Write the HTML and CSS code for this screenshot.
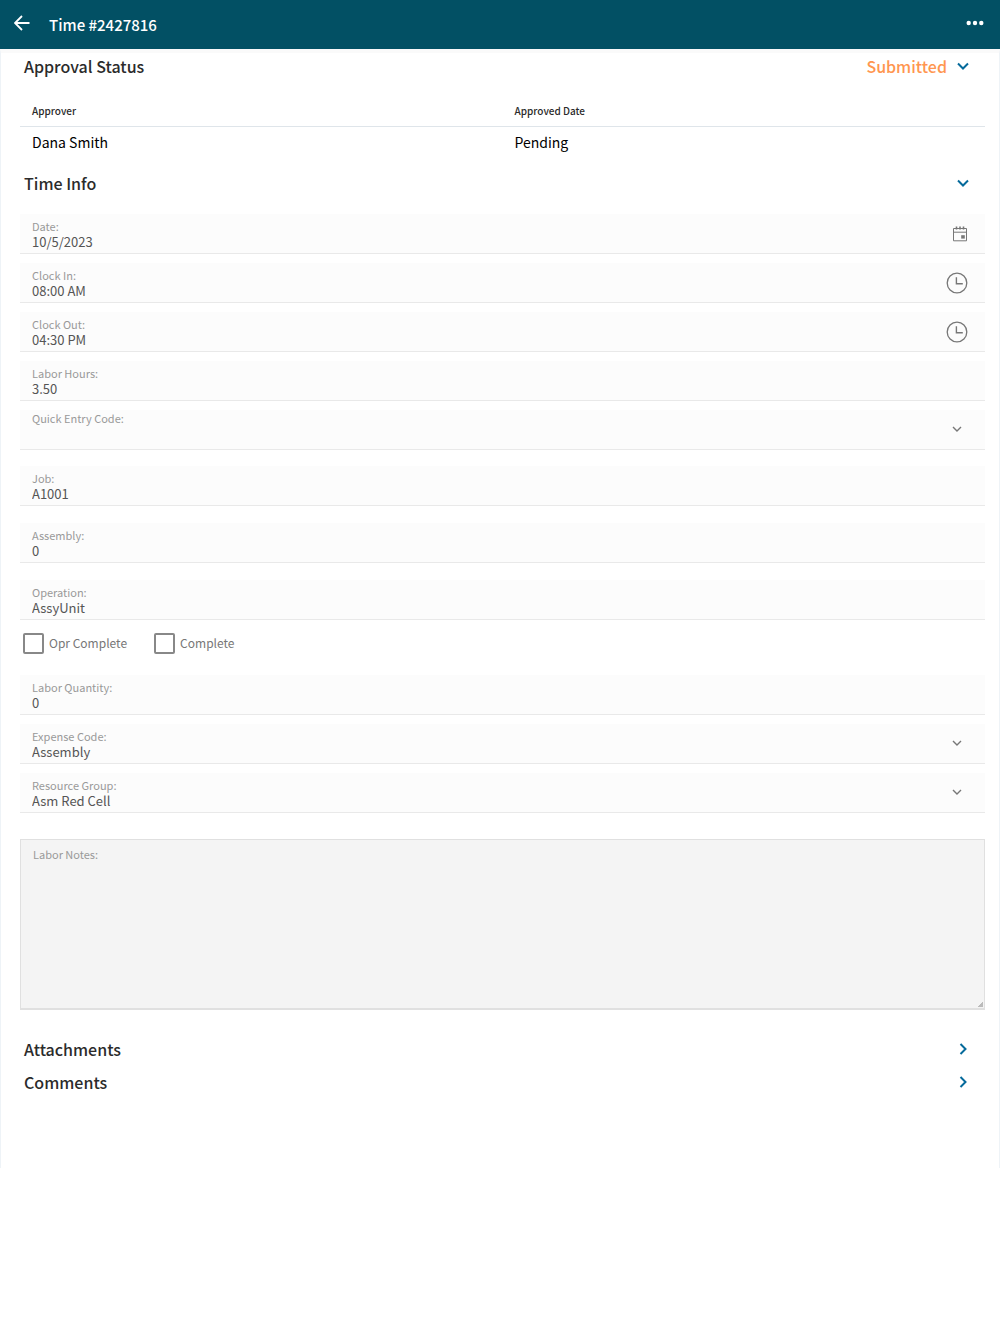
FILE: index.html
```html
<!DOCTYPE html>
<html lang="en">
<head>
    <meta charset="UTF-8">
    <meta name="viewport" content="width=device-width, initial-scale=1.0">
    <title>Time #2427816</title>
    <link rel="stylesheet" href="styles.css">
</head>
<body>
    <!-- top bar -->
    <header class="topbar">
        <button type="button" class="icon-btn" aria-label="Back">
            <svg width="16" height="16" viewBox="0 0 16 16"><path d="M15.5 8H1.5M8 1L1 8l7 7" fill="none" stroke="#fff" stroke-width="1.8"/></svg>
        </button>
        <h1>Time #2427816</h1>
        <button type="button" class="icon-btn more" aria-label="More">
            <svg width="18" height="6" viewBox="0 0 18 6" fill="#fff"><circle cx="2.7" cy="3" r="2.2"/><circle cx="9" cy="3" r="2.2"/><circle cx="15.3" cy="3" r="2.2"/></svg>
        </button>
    </header>

    <main class="page">
        <!-- approval status -->
        <section>
            <div class="section-head">
                <h2>Approval Status</h2>
                <span class="status">Submitted</span>
                <button type="button" class="icon-btn toggle" aria-label="Collapse Approval Status">
                    <svg width="12" height="12" viewBox="0 0 12 12"><path d="M1 3.5l5 5 5-5"/></svg>
                </button>
            </div>
            <table class="approvers">
                <thead>
                    <tr><th>Approver</th><th>Approved Date</th></tr>
                </thead>
                <tbody>
                    <tr><td>Dana Smith</td><td>Pending</td></tr>
                </tbody>
            </table>
        </section>

        <!-- time info -->
        <section>
            <div class="section-head">
                <h2>Time Info</h2>
                <button type="button" class="icon-btn toggle" aria-label="Collapse Time Info">
                    <svg width="12" height="12" viewBox="0 0 12 12"><path d="M1 3.5l5 5 5-5"/></svg>
                </button>
            </div>

            <form class="form">
                <div class="group">
                    <div class="field">
                        <div class="text">
                            <label for="date">Date:</label>
                            <input type="text" id="date" value="10/5/2023" readonly>
                        </div>
                        <button type="button" class="icon-btn" aria-label="Pick date">
                            <svg width="16" height="16" viewBox="0 0 16 16"><path d="M1.5 2.5h13v12.3h-13zM1.5 6.2h13" fill="none" stroke="#777"/><path d="M4.5 .5v3M8 .5v3M11.5 .5v3" stroke="#777" stroke-width="1.6"/><path d="M9.2 9.2h3.6v3.4H9.2z" fill="#777"/></svg>
                        </button>
                    </div>
                    <div class="field">
                        <div class="text">
                            <label for="clock-in">Clock In:</label>
                            <input type="text" id="clock-in" value="08:00 AM" readonly>
                        </div>
                        <button type="button" class="icon-btn" aria-label="Pick clock in time">
                            <svg width="22" height="22" viewBox="0 0 22 22"><path d="M10.4 5.2v6.6h6.4" fill="none" stroke="#777" stroke-width="1.4"/><circle cx="11" cy="11" r="9.8" fill="none" stroke="#777" stroke-width="1.3"/></svg>
                        </button>
                    </div>
                    <div class="field">
                        <div class="text">
                            <label for="clock-out">Clock Out:</label>
                            <input type="text" id="clock-out" value="04:30 PM" readonly>
                        </div>
                        <button type="button" class="icon-btn" aria-label="Pick clock out time">
                            <svg width="22" height="22" viewBox="0 0 22 22"><path d="M10.4 5.2v6.6h6.4" fill="none" stroke="#777" stroke-width="1.4"/><circle cx="11" cy="11" r="9.8" fill="none" stroke="#777" stroke-width="1.3"/></svg>
                        </button>
                    </div>
                    <div class="field">
                        <div class="text">
                            <label for="hours">Labor Hours:</label>
                            <input type="text" id="hours" value="3.50" readonly>
                        </div>
                    </div>
                    <div class="field empty">
                        <div class="text">
                            <label for="quick">Quick Entry Code:</label>
                            <select id="quick"><option></option></select>
                        </div>
                        <svg class="arrow" width="10" height="10" viewBox="0 0 10 10"><path d="M1 3l4 4 4-4"/></svg>
                    </div>
                </div>

                <div class="group wide">
                    <div class="field">
                        <div class="text">
                            <label for="job">Job:</label>
                            <input type="text" id="job" value="A1001" readonly>
                        </div>
                    </div>
                    <div class="field">
                        <div class="text">
                            <label for="assembly">Assembly:</label>
                            <input type="text" id="assembly" value="0" readonly>
                        </div>
                    </div>
                    <div class="field">
                        <div class="text">
                            <label for="operation">Operation:</label>
                            <input type="text" id="operation" value="AssyUnit" readonly>
                        </div>
                    </div>
                </div>

                <div class="checks">
                    <label><input type="checkbox">Opr Complete</label>
                    <label><input type="checkbox">Complete</label>
                </div>

                <div class="group">
                    <div class="field">
                        <div class="text">
                            <label for="quantity">Labor Quantity:</label>
                            <input type="text" id="quantity" value="0" readonly>
                        </div>
                    </div>
                    <div class="field">
                        <div class="text">
                            <label for="expense">Expense Code:</label>
                            <select id="expense"><option>Assembly</option></select>
                        </div>
                        <svg class="arrow" width="10" height="10" viewBox="0 0 10 10"><path d="M1 3l4 4 4-4"/></svg>
                    </div>
                    <div class="field">
                        <div class="text">
                            <label for="resource">Resource Group:</label>
                            <select id="resource"><option>Asm Red Cell</option></select>
                        </div>
                        <svg class="arrow" width="10" height="10" viewBox="0 0 10 10"><path d="M1 3l4 4 4-4"/></svg>
                    </div>
                </div>

                <div class="notes">
                    <label for="notes">Labor Notes:</label>
                    <textarea id="notes"></textarea>
                </div>
            </form>
        </section>

        <!-- collapsed sections -->
        <section class="section-head">
            <h2>Attachments</h2>
            <button type="button" class="icon-btn toggle" aria-label="Expand Attachments">
                <svg width="12" height="12" viewBox="0 0 12 12"><path d="M3.5 1l5 5-5 5"/></svg>
            </button>
        </section>
        <section class="section-head">
            <h2>Comments</h2>
            <button type="button" class="icon-btn toggle" aria-label="Expand Comments">
                <svg width="12" height="12" viewBox="0 0 12 12"><path d="M3.5 1l5 5-5 5"/></svg>
            </button>
        </section>
    </main>
</body>
</html>
```
FILE: styles.css
```css
*{
    margin: 0;
    padding: 0;
    box-sizing: border-box;
}
body, input, select, textarea, button{
    font-family: "Noto Sans CJK SC", "Noto Sans", sans-serif;
}
body{
    background: #fff;
    color: #2b2b2b;
}
.icon-btn{
    display: flex;
    border: none;
    background: none;
    cursor: pointer;
}

/* top bar */
.topbar{
    display: flex;
    align-items: center;
    height: 49px;
    padding: 0 16px 0 14px;
    background: #025064;
    color: #fff;
}
.topbar .icon-btn{
    padding-bottom: 3px;
}
.topbar h1{
    margin-left: 19px;
    font-size: 15px;
    font-weight: 500;
}
.topbar .more{
    margin-left: auto;
}

.page{
    padding-bottom: 66px;
    border: 1px solid #eef3f7;
    border-top: 4px solid #fafafa;
    border-bottom: none;
}

/* section title row */
.section-head{
    display: flex;
    align-items: center;
    height: 33px;
    padding: 0 30px 7px 23px;
}
.section-head h2{
    flex: 1;
    font-size: 16px;
    font-weight: 500;
    line-height: 24px;
}
.status{
    margin-right: 10px;
    color: #ff964f;
    font-size: 16px;
    font-weight: 500;
    line-height: 24px;
}
.toggle path{
    fill: none;
    stroke: #056a9b;
    stroke-width: 2;
}

/* approvers table */
.approvers{
    width: calc(100% - 33px);
    margin: 9px 14px 13px 19px;
    border-collapse: collapse;
    table-layout: fixed;
    text-align: left;
}
.approvers th{
    height: 31px;
    padding-left: 12px;
    border-bottom: 1px solid #dfe5ea;
    font-size: 10px;
    font-weight: 500;
}
.approvers td{
    height: 31px;
    padding-left: 12px;
    color: #000;
    font-size: 14px;
}

/* form fields */
.form{
    padding: 11px 14px 26px 19px;
}
.group{
    display: flex;
    flex-direction: column;
    gap: 9px;
}
.wide{
    gap: 17px;
    margin-top: 16px;
}
.field{
    display: flex;
    align-items: center;
    height: 40px;
    padding: 0 17px 0 12px;
    border-bottom: 1px solid #e9e9e9;
    background: #fcfcfc;
}
.text{
    display: flex;
    flex: 1;
    flex-direction: column;
}
.empty .text{
    padding-bottom: 7px;
}
.text label, .notes label{
    color: #999;
    font-size: 11px;
    line-height: 16px;
}
.text input, .text select{
    width: 100%;
    height: 16px;
    border: none;
    outline: none;
    background: none;
    color: #555;
    font-size: 13px;
    line-height: 16px;
    appearance: none;
}
.arrow{
    margin: 0 6px 2px 0;
}
.arrow path{
    fill: none;
    stroke: #777;
    stroke-width: 1.4;
}

/* check boxes */
.checks{
    display: flex;
    gap: 27px;
    padding: 12px 3px 21px;
}
.checks label{
    display: flex;
    align-items: center;
    gap: 5px;
    color: #777;
    font-size: 12px;
    line-height: 22px;
}
.checks input{
    width: 21px;
    height: 21px;
    border: 2px solid #888;
    border-radius: 2px;
    background: #fff;
    appearance: none;
}

/* notes */
.notes{
    display: flex;
    flex-direction: column;
    height: 171px;
    margin-top: 26px;
    padding: 6px 0 0 12px;
    border: 1px solid #e0e0e0;
    border-bottom-width: 2px;
    background: linear-gradient(135deg, transparent 50%, #bbb 50%) right 1px bottom 1px / 5px 5px no-repeat #f4f4f4;
}
.notes textarea{
    flex: 1;
    border: none;
    outline: none;
    background: none;
    color: #555;
    font-size: 13px;
    resize: none;
}
```
